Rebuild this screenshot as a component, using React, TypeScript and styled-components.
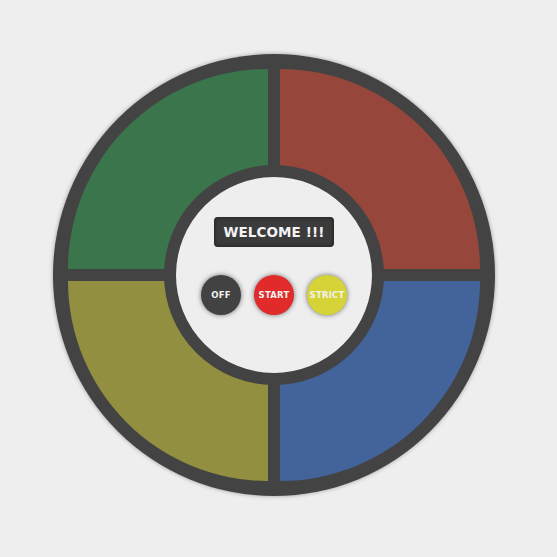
import React from "react";
import styled, { createGlobalStyle } from "styled-components";

const Global = createGlobalStyle`
  html, body { margin: 0; padding: 0; background: #eeeeee; }
  body { font-family: "DejaVu Sans", "Liberation Sans", sans-serif; }
`;

const Page = styled.div`
  width: 557px;
  height: 557px;
  box-sizing: border-box;
  padding: 54px 0 0 53px;
`;

const Board = styled.div`
  position: relative;
  width: 442px;
  height: 442px;
  box-sizing: border-box;
  padding: 15px;
  border-radius: 50%;
  background: #434343;
  box-shadow: 0 0 4px rgba(0, 0, 0, 0.35);
  display: grid;
  grid-template-columns: 200px 200px;
  grid-template-rows: 200px 200px;
  gap: 12px;
`;

type Corner = "tl" | "tr" | "bl" | "br";
const radius: Record<Corner, string> = {
  tl: "100% 0 0 0",
  tr: "0 100% 0 0",
  bl: "0 0 0 100%",
  br: "0 0 100% 0",
};

const Pad = styled.div<{ $color: string; $corner: Corner }>`
  background: ${(p) => p.$color};
  border-radius: ${(p) => radius[p.$corner]};
`;

const Hub = styled.div`
  position: absolute;
  left: 50%;
  top: 50%;
  width: 220px;
  height: 220px;
  margin: -110px 0 0 -110px;
  box-sizing: border-box;
  border: 12px solid #434343;
  border-radius: 50%;
  background: #eeeeee;
  display: flex;
  flex-direction: column;
  align-items: center;
  padding-top: 40px;
  gap: 28px;
`;

const Display = styled.div`
  width: 120px;
  height: 30px;
  box-sizing: border-box;
  border-radius: 4px;
  background: #3b3b3b;
  box-shadow: inset 0 0 4px rgba(0, 0, 0, 0.6);
  display: flex;
  align-items: center;
  justify-content: center;
  color: #f4f4f4;
  font-weight: bold;
  font-size: 13.5px;
  letter-spacing: 0.1px;
`;

const Controls = styled.div`
  display: flex;
  gap: 13px;
`;

const Control = styled.div<{ $color: string }>`
  width: 40px;
  height: 40px;
  border-radius: 50%;
  background: ${(p) => p.$color};
  box-shadow: 0 0 5px rgba(0, 0, 0, 0.55);
  display: flex;
  align-items: center;
  justify-content: center;
  color: #f2f2f2;
  font-weight: bold;
  font-size: 8.5px;
  letter-spacing: 0.2px;
`;

export default function App() {
  return (
    <Page>
      <Global />
      <Board>
        <Pad $corner="tl" $color="#3a754b" />
        <Pad $corner="tr" $color="#97463b" />
        <Pad $corner="bl" $color="#938f40" />
        <Pad $corner="br" $color="#42649a" />
        <Hub>
          <Display>WELCOME !!!</Display>
          <Controls>
            <Control $color="#424242">OFF</Control>
            <Control $color="#e12a2a">START</Control>
            <Control $color="#d5d335">STRICT</Control>
          </Controls>
        </Hub>
      </Board>
    </Page>
  );
}
